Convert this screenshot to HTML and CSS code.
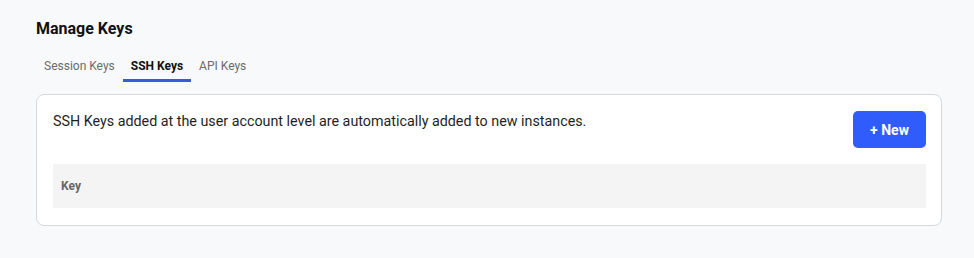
FILE: index.html
```html
<html>
<head>
	<title>Manage Keys</title>
	<link rel="stylesheet" href="styles.css">
</head>
<body>

<div class="page">
	<h1 class="title">Manage Keys</h1>

	<div class="tabs">
		<span class="tab">Session Keys</span>
		<span class="tab active">SSH Keys</span>
		<span class="tab">API Keys</span>
	</div>

	<div class="card">
		<div class="card-top">
			<p class="info">SSH Keys added at the user account level are automatically added to new instances.</p>
			<button class="btn-new">+ New</button>
		</div>
		<div class="table-head">
			<span class="col">Key</span>
		</div>
	</div>
</div>

</body>
</html>
```

FILE: styles.css
```css
body{
	margin: 0;
	background-color: #f8f9fb;
	font-family: Roboto, "Liberation Sans", sans-serif;
	color: #1a1a1a;
}

.page{
	padding: 18px 32px 0 36px;
}

.title{
	font-size: 16px;
	font-weight: 700;
	margin: 0;
	line-height: 22px;
	color: #111;
}

.tabs{
	display: flex;
	margin-top: 16px;
	margin-bottom: 12px;
}

.tab{
	font-size: 12px;
	color: #6b6b6b;
	padding: 0 8px;
	line-height: 20px;
	border-bottom: 3px solid transparent;
	padding-bottom: 3px;
}

.tab.active{
	color: #111;
	font-weight: 700;
	border-bottom-color: #3a5bd9;
}

/* the white box */
.card{
	background-color: #fff;
	border: 1px solid #d6d8dc;
	border-radius: 8px;
	padding: 16px 15px 17px 16px;
}

.card-top{
	display: flex;
	justify-content: space-between;
	align-items: flex-start;
}

.info{
	margin: 0;
	font-size: 14.3px;
	line-height: 20px;
	color: #1f1f1f;
}

.btn-new{
	background-color: #2f5cfb;
	color: #fff;
	border: none;
	border-radius: 5px;
	font-family: Roboto, "Liberation Sans", sans-serif;
	font-size: 14px;
	font-weight: 700;
	width: 73px;
	height: 37px;
	cursor: pointer;
}

.table-head{
	margin-top: 16px;
	background-color: #f4f4f4;
	height: 44px;
	display: flex;
	align-items: center;
	padding-left: 8px;
}

.col{
	font-size: 12px;
	font-weight: 700;
	color: #666;
}
```
